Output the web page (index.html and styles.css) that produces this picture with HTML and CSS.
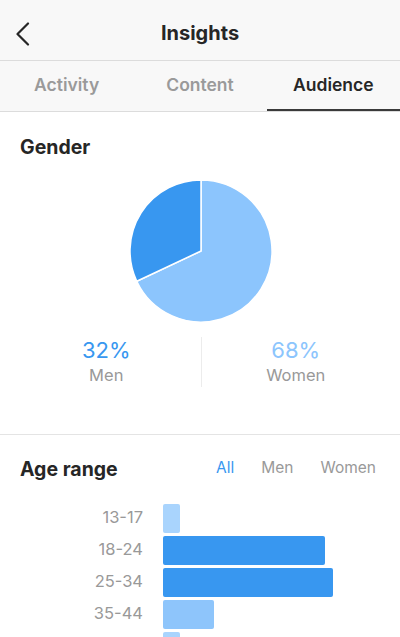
FILE: index.html
```html
<!DOCTYPE html>
<html lang="en">
<head>
    <meta charset="UTF-8">
    <meta name="viewport" content="width=device-width, initial-scale=1.0">
    <title>Insights</title>
    <link rel="stylesheet" href="styles.css">
</head>
<body>
    <div class="topbar">
        <svg class="back" width="16" height="24" viewBox="0 0 16 24">
            <path d="M13 1.5 L2.5 12 L13 22.5" fill="none" stroke="#262626" stroke-width="2.2" stroke-linecap="round" stroke-linejoin="round"/>
        </svg>
        <div class="title">Insights</div>
    </div>

    <div class="tabs">
        <div class="tab">Activity</div>
        <div class="tab">Content</div>
        <div class="tab active">Audience</div>
    </div>

    <div class="section gender">
        <div class="section-title">Gender</div>
        <svg class="pie" width="142" height="142" viewBox="0 0 142 142">
            <path d="M71 71 L71 0 A71 71 0 1 1 6.75 101.2 Z" fill="#8cc5fd" stroke="#fff" stroke-width="1.5" stroke-linejoin="round"/>
            <path d="M71 71 L71 0 A71 71 0 0 0 6.75 101.2 Z" fill="#3897f0" stroke="#fff" stroke-width="1.5" stroke-linejoin="round"/>
        </svg>
        <div class="stats">
            <div class="stat men">
                <div class="pct">32%</div>
                <div class="label">Men</div>
            </div>
            <div class="stat women">
                <div class="pct">68%</div>
                <div class="label">Women</div>
            </div>
        </div>
    </div>

    <div class="section age">
        <div class="age-head">
            <div class="section-title">Age range</div>
            <div class="filters">
                <span class="filter active">All</span>
                <span class="filter">Men</span>
                <span class="filter">Women</span>
            </div>
        </div>
        <div class="bars">
            <div class="row"><span class="range">13-17</span><div class="bar pale" style="width: 17px"></div></div>
            <div class="row"><span class="range">18-24</span><div class="bar dark" style="width: 162px"></div></div>
            <div class="row"><span class="range">25-34</span><div class="bar dark" style="width: 170px"></div></div>
            <div class="row"><span class="range">35-44</span><div class="bar light" style="width: 51px"></div></div>
            <div class="row"><span class="range"></span><div class="bar pale" style="width: 17px"></div></div>
        </div>
    </div>
</body>
</html>
```

FILE: styles.css
```css
/* Base */
body {
    margin: 0;
    font-family: Inter, "Liberation Sans", sans-serif;
    background-color: #fff;
    color: #262626;
    overflow: hidden;
}

/* Top bar */
.topbar {
    height: 60px;
    background-color: #f8f8f8;
    border-bottom: 1px solid #dcdcdc;
    display: flex;
    align-items: center;
    justify-content: center;
    position: relative;
}
.back {
    position: absolute;
    left: 15px;
    top: 22px;
}
.title {
    font-size: 20px;
    font-weight: 700;
    margin-top: 6px;
}

/* Tabs */
.tabs {
    height: 50px;
    display: flex;
    background-color: #f8f8f8;
    border-bottom: 1px solid #dcdcdc;
}
.tab {
    flex: 1;
    display: flex;
    align-items: center;
    justify-content: center;
    font-size: 17.5px;
    font-weight: 600;
    color: #9a9a9a;
    padding-bottom: 3px;
}
.tab.active {
    color: #262626;
    border-bottom: 2px solid #3a3a3a;
    padding-bottom: 1px;
}

/* Sections */
.section {
    padding: 23px 20px 0;
}
.section-title {
    font-size: 19.5px;
    font-weight: 700;
    line-height: 24px;
    color: #262626;
}
.gender {
    height: 299px;
    display: flex;
    flex-direction: column;
    align-items: center;
    border-bottom: 1px solid #e4e4e4;
}
.gender .section-title {
    align-self: flex-start;
}
.pie {
    margin-top: 21px;
    margin-left: 1px;
}
.stats {
    display: flex;
    align-self: stretch;
    margin: 15px -20px 0;
}
.stat {
    flex: 1;
    text-align: center;
    height: 50px;
}
.stat.men {
    border-right: 1px solid #ececec;
    padding-left: 12px;
}
.stat.women {
    padding-right: 10px;
}
.pct {
    font-size: 22px;
    line-height: 26px;
    font-weight: 400;
}
.men .pct {
    color: #3897f0;
}
.women .pct {
    color: #8cc5fd;
}
.label {
    font-size: 16.5px;
    line-height: 24px;
    color: #999;
}

/* Age range */
.age {
    padding-top: 22px;
}
.age-head {
    display: flex;
    justify-content: space-between;
    align-items: center;
    padding-right: 4px;
}
.filters {
    display: flex;
    gap: 27px;
    font-size: 15.5px;
    color: #999;
    margin-top: -3px;
}
.filter.active {
    color: #3897f0;
}
.bars {
    margin-top: 23px;
    display: flex;
    flex-direction: column;
    gap: 3px;
}
.row {
    display: flex;
    align-items: center;
    height: 29px;
}
.range {
    width: 123px;
    text-align: right;
    font-size: 16.5px;
    line-height: 20px;
    color: #999;
    margin-right: 20px;
    margin-top: -4px;
}
.bar {
    height: 29px;
    border-radius: 2px;
}
.bar.dark {
    background-color: #3897f0;
}
.bar.light {
    background-color: #8ec5fb;
}
.bar.pale {
    background-color: #a9d4fd;
}
```
